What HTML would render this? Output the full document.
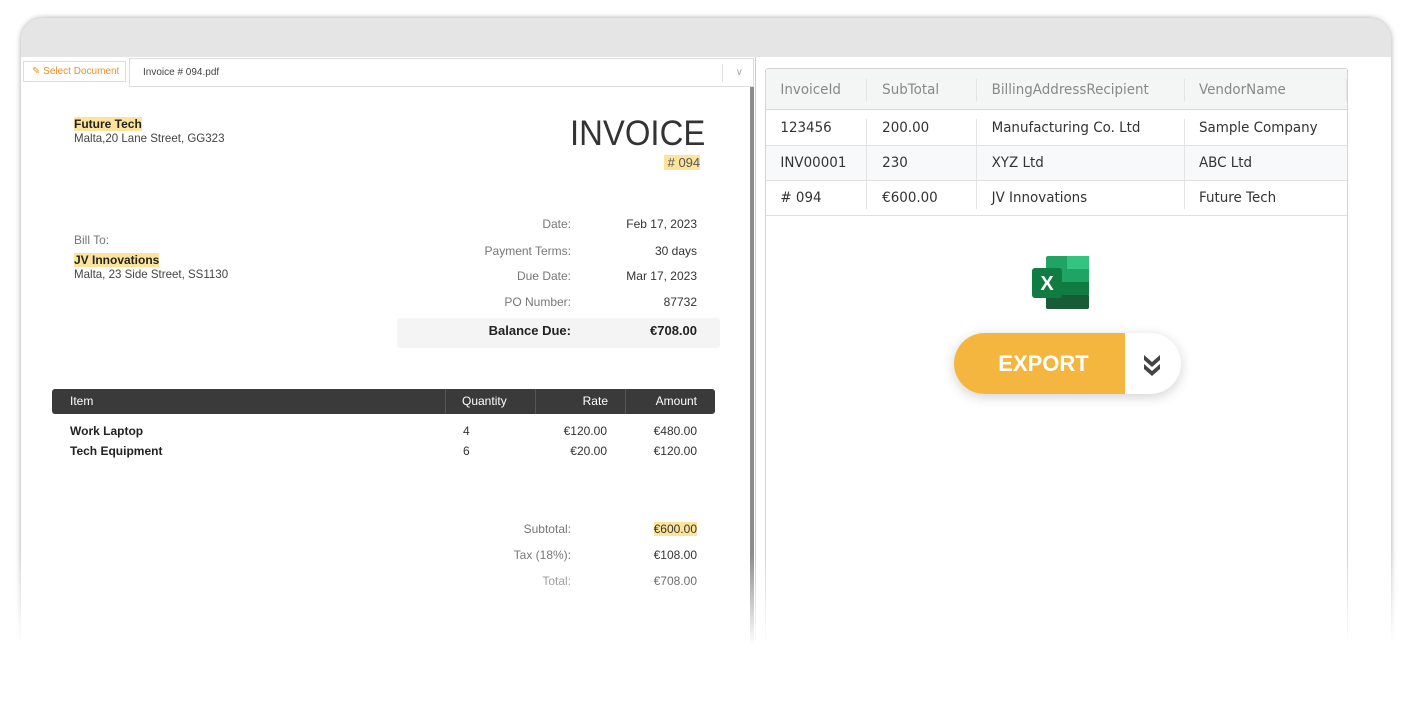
<!DOCTYPE html>
<html><head><meta charset="utf-8"><style>
*{margin:0;padding:0;box-sizing:border-box}
body{width:1412px;height:720px;background:#fff;position:relative;overflow:hidden;font-family:"Liberation Sans",Arial,sans-serif;color:#333}
.a{position:absolute}
.frame{left:21px;top:18px;width:1370px;height:700px;border-radius:22px 22px 0 0;background:#fff;box-shadow:0 0 6px rgba(0,0,0,.35);overflow:hidden}
.hl{background:#fde49a}
.r{text-align:right}
.lab{color:#777;font-size:12px}
.val{color:#333;font-size:12px}
</style></head><body>
<div class="a frame">
  <div class="a" style="left:0;top:0;width:1370px;height:39px;background:#e5e5e5"></div>
  <div class="a" style="left:2px;top:43px;width:103px;height:21px;border:1px solid #ddd;background:#fff;color:#e8912b;font-size:10px;line-height:19px;padding-left:8px">&#x270E; Select Document</div>
  <div class="a" style="left:108px;top:40px;width:625px;height:29px;border:1px solid #ddd;background:#fff;font-size:10px;line-height:27px;padding-left:13px;color:#444">Invoice # 094.pdf
    <div class="a" style="right:30px;top:5px;width:1px;height:18px;background:#ddd"></div>
    <div class="a" style="right:10px;top:0;color:#aaa;font-size:10px">&#x2228;</div>
  </div>
  <div class="a" style="left:729px;top:69px;width:4px;height:560px;background:#8d8d8d"></div>
  <div class="a" style="left:734px;top:39px;width:1px;height:600px;background:#ccc"></div>

  <div class="a" style="left:53px;top:99px;font-size:12px;font-weight:bold;color:#222"><span class="hl">Future Tech</span></div>
  <div class="a" style="left:53px;top:113px;font-size:12px;color:#444;transform:scaleX(.96);transform-origin:left">Malta,20 Lane Street, GG323</div>
  <div class="a" style="left:549px;top:96px;font-size:35px;color:#333;transform:scaleX(.94);transform-origin:left;font-weight:normal">INVOICE</div>
  <div class="a" style="left:643px;top:137px;font-size:13px;color:#555"><span class="hl">&nbsp;# 094</span></div>

  <div class="a lab" style="left:53px;top:215px">Bill To:</div>
  <div class="a" style="left:53px;top:235px;font-size:12px;font-weight:bold;color:#222"><span class="hl">JV Innovations</span></div>
  <div class="a" style="left:53px;top:249px;font-size:12px;color:#444;transform:scaleX(.96);transform-origin:left">Malta, 23 Side Street, SS1130</div>

  <div class="a lab r" style="left:400px;width:150px;top:199px">Date:</div><div class="a val r" style="left:560px;width:116px;top:199px">Feb 17, 2023</div>
  <div class="a lab r" style="left:400px;width:150px;top:226px">Payment Terms:</div><div class="a val r" style="left:560px;width:116px;top:226px">30 days</div>
  <div class="a lab r" style="left:400px;width:150px;top:251px">Due Date:</div><div class="a val r" style="left:560px;width:116px;top:251px">Mar 17, 2023</div>
  <div class="a lab r" style="left:400px;width:150px;top:277px">PO Number:</div><div class="a val r" style="left:560px;width:116px;top:277px">87732</div>
  <div class="a" style="left:376px;top:300px;width:323px;height:30px;background:#f4f4f4;border-radius:3px"></div>
  <div class="a r" style="left:400px;width:150px;top:305px;font-size:13px;font-weight:bold;color:#222">Balance Due:</div>
  <div class="a r" style="left:560px;width:116px;top:305px;font-size:13px;font-weight:bold;color:#222">€708.00</div>

  <div class="a" style="left:31px;top:371px;width:663px;height:25px;background:#3a3a3a;border-radius:3px;color:#fff;font-size:12px;line-height:25px">
    <span class="a" style="left:18px">Item</span>
    <div class="a" style="left:393px;top:0;width:1px;height:25px;background:#555"></div>
    <span class="a" style="left:410px">Quantity</span>
    <div class="a" style="left:483px;top:0;width:1px;height:25px;background:#555"></div>
    <span class="a r" style="left:490px;width:66px">Rate</span>
    <div class="a" style="left:573px;top:0;width:1px;height:25px;background:#555"></div>
    <span class="a r" style="left:580px;width:65px">Amount</span>
  </div>
  <div class="a" style="left:49px;top:406px;font-size:12px;font-weight:bold;color:#222">Work Laptop</div>
  <div class="a val" style="left:442px;top:406px">4</div>
  <div class="a val r" style="left:500px;width:86px;top:406px">€120.00</div>
  <div class="a val r" style="left:590px;width:86px;top:406px">€480.00</div>
  <div class="a" style="left:49px;top:426px;font-size:12px;font-weight:bold;color:#222">Tech Equipment</div>
  <div class="a val" style="left:442px;top:426px">6</div>
  <div class="a val r" style="left:500px;width:86px;top:426px">€20.00</div>
  <div class="a val r" style="left:590px;width:86px;top:426px">€120.00</div>

  <div class="a lab r" style="left:400px;width:150px;top:504px">Subtotal:</div><div class="a val r" style="left:560px;width:116px;top:504px"><span class="hl">€600.00</span></div>
  <div class="a lab r" style="left:400px;width:150px;top:530px">Tax (18%):</div><div class="a val r" style="left:560px;width:116px;top:530px">€108.00</div>
  <div class="a lab r" style="left:400px;width:150px;top:556px">Total:</div><div class="a val r" style="left:560px;width:116px;top:556px">€708.00</div>

  <div class="a" style="left:744px;top:50px;width:583px;height:600px;border:1px solid #d4d4d4;border-radius:3px;background:#fff;overflow:hidden">
    <div class="a" style="left:0;top:0;width:583px;height:41px;background:#f4f5f5;border-bottom:1px solid #d8d8d8"></div>
    <div class="a" style="left:0;top:76px;width:583px;height:35px;background:#f7f9fb"></div>
    <div class="a" style="left:0;top:76px;width:583px;height:1px;background:#e0e0e0"></div>
    <div class="a" style="left:0;top:111px;width:583px;height:1px;background:#e0e0e0"></div>
    <div class="a" style="left:0;top:146px;width:583px;height:1px;background:#e0e0e0"></div>
    <div class="a" style="left:100px;top:10px;width:1px;height:22px;background:#e4e4e4"></div>
    <div class="a" style="left:210px;top:10px;width:1px;height:22px;background:#e4e4e4"></div>
    <div class="a" style="left:418px;top:10px;width:1px;height:22px;background:#e4e4e4"></div>
    <div class="a" style="left:100px;top:50px;width:1px;height:90px;background:#e4e4e4"></div>
    <div class="a" style="left:210px;top:50px;width:1px;height:90px;background:#e4e4e4"></div>
    <div class="a" style="left:418px;top:50px;width:1px;height:90px;background:#e4e4e4"></div>
    <div class="a" style="left:580px;top:10px;width:1px;height:22px;background:#e4e4e4"></div>
    <div style="font-family:'DejaVu Sans',sans-serif;font-size:14px;color:#888;transform:scaleX(.96);transform-origin:left">
      <span class="a" style="left:15px;top:13px">InvoiceId</span>
      <span class="a" style="left:121px;top:13px">SubTotal</span>
      <span class="a" style="left:235px;top:13px">BillingAddressRecipient</span>
      <span class="a" style="left:451px;top:13px">VendorName</span>
    </div>
    <div style="font-family:'DejaVu Sans',sans-serif;font-size:14px;color:#333;transform:scaleX(.96);transform-origin:left">
      <span class="a" style="left:15px;top:51px">123456</span><span class="a" style="left:121px;top:51px">200.00</span><span class="a" style="left:235px;top:51px">Manufacturing Co. Ltd</span><span class="a" style="left:451px;top:51px">Sample Company</span>
      <span class="a" style="left:15px;top:86px">INV00001</span><span class="a" style="left:121px;top:86px">230</span><span class="a" style="left:235px;top:86px">XYZ Ltd</span><span class="a" style="left:451px;top:86px">ABC Ltd</span>
      <span class="a" style="left:15px;top:121px"># 094</span><span class="a" style="left:121px;top:121px">€600.00</span><span class="a" style="left:235px;top:121px">JV Innovations</span><span class="a" style="left:451px;top:121px">Future Tech</span>
    </div>
  </div>

  <svg class="a" style="left:1011px;top:238px" width="58" height="53" viewBox="0 0 58 53">
    <rect x="14" y="0" width="43" height="53" rx="2" fill="#21a366"/>
    <rect x="35" y="0" width="22" height="13" fill="#33c481"/>
    <rect x="35" y="26" width="22" height="13" fill="#107c41"/>
    <rect x="14" y="26" width="21" height="13" fill="#107c41"/>
    <rect x="14" y="39" width="43" height="14" rx="2" fill="#185c37"/>
    <rect x="0" y="12" width="30" height="30" rx="3" fill="#107c41"/>
    <text x="15" y="34" font-family="Liberation Sans" font-weight="bold" font-size="20" fill="#fff" text-anchor="middle">X</text>
  </svg>

  <div class="a" style="left:933px;top:315px;width:227px;height:61px;border-radius:31px;background:#fff;box-shadow:0 3px 12px rgba(0,0,0,.18);overflow:hidden">
    <div class="a" style="left:0;top:0;width:171px;height:61px;background:#f4b63f;color:#fff;font-size:22px;font-weight:bold;line-height:61px;text-align:center;padding-left:8px">EXPORT</div>
    <svg class="a" style="left:188px;top:20px" width="20" height="24" viewBox="0 0 20 24"><path d="M2 2l8 7 8-7v5l-8 7-8-7z M2 11l8 7 8-7v5l-8 7-8-7z" fill="#444"/></svg>
  </div>
</div>
<div class="a" style="left:0;top:555px;width:1412px;height:90px;background:linear-gradient(rgba(255,255,255,0),#fff)"></div>
<div class="a" style="left:0;top:645px;width:1412px;height:75px;background:#fff"></div>
</body></html>
